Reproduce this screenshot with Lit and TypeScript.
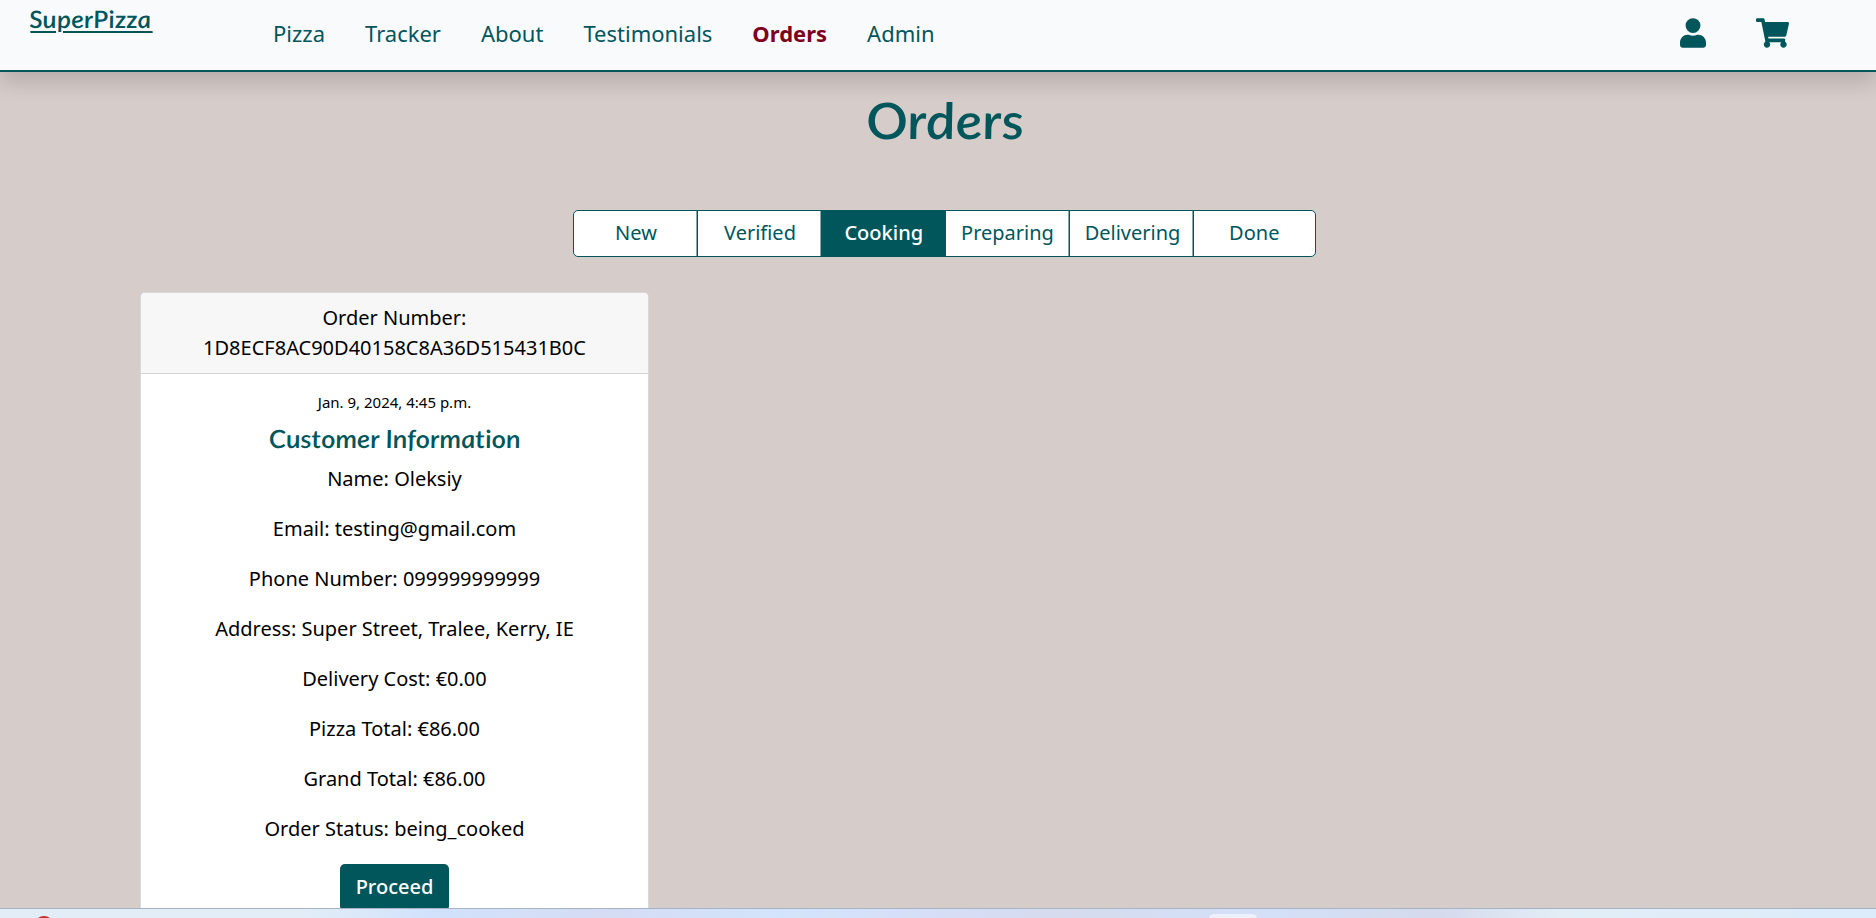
import { LitElement, html, css, svg } from "lit";
import { customElement, property } from "lit/decorators.js";
import { classMap } from "lit/directives/class-map.js";

const NAV = ["Pizza", "Tracker", "About", "Testimonials", "Orders", "Admin"];
const STATUSES = ["New", "Verified", "Cooking", "Preparing", "Delivering", "Done"];

const userIcon = svg`<path d="M224 256a128 128 0 1 0 0-256 128 128 0 1 0 0 256zm89.6 32h-16.7c-22.2 10.2-46.900 16-72.900 16s-50.600-5.800-72.900-16h-16.700C60.200 288 0 348.200 0 422.400V464c0 26.500 21.500 48 48 48h352c26.500 0 48-21.500 48-48v-41.600c0-74.200-60.200-134.400-134.400-134.400z"/>`;
const cartIcon = svg`<path d="M528.120 301.319l47.273-208C578.806 78.301 567.391 64 551.990 64H159.208l-9.166-44.810C147.758 8.021 137.930 0 126.529 0H24C10.745 0 0 10.745 0 24v16c0 13.255 10.745 24 24 24h69.883l70.248 343.435C147.325 417.100 136 435.222 136 456c0 30.928 25.072 56 56 56s56-25.072 56-56c0-15.674-6.447-29.835-16.824-40h209.647C430.447 426.165 424 440.326 424 456c0 30.928 25.072 56 56 56s56-25.072 56-56c0-22.172-12.888-41.332-31.579-50.405l5.517-24.276c3.413-15.018-8.002-29.319-23.403-29.319H218.117l-6.545-32h293.145c11.206 0 20.920-7.754 23.403-18.681z"/>`;

@customElement("site-header")
class SiteHeader extends LitElement {
  static styles = css`
    :host { display: block; position: relative; z-index: 1; }
    .bar {
      box-sizing: border-box;
      height: 72px;
      display: flex;
      align-items: flex-start;
      background: #f8fafc;
      border-bottom: 2px solid #00565b;
      box-shadow: 0 10px 20px rgba(0, 0, 0, 0.15);
    }
    .brand {
      width: 244px;
      padding: 3px 0 0 30px;
      box-sizing: border-box;
      font: italic 600 24px/32px Lato, sans-serif;
      color: #00565b;
    }
    .word {
      display: inline-block;
      transform: scaleX(1.095) skewX(6deg);
      transform-origin: 0 80%;
      text-decoration: underline;
      text-decoration-thickness: 2px;
      text-underline-offset: 3px;
      letter-spacing: 0.2px;
    }
    .links { display: flex; gap: 40px; padding: 17px 0 0 29px; }
    .link { font: 22px/33px "Noto Sans", sans-serif; color: #00565b; text-decoration: none; }
    .active { font-weight: 700; color: #7d0020; }
    .icons { margin-left: auto; display: flex; padding: 18px 87px 0 0; gap: 50px; }
    .icon { display: block; fill: #00565b; height: 30px; }
    .user { width: 26px; }
    .cart { width: 33px; }
  `;
  render() {
    return html`<nav class="bar">
      <a class="brand"><span class="word">SuperPizza</span></a>
      <div class="links">
        ${NAV.map((n) => html`<a class=${classMap({ link: true, active: n === "Orders" })}>${n}</a>`)}
      </div>
      <div class="icons">
        <svg class="icon user" viewBox="0 0 448 512">${userIcon}</svg>
        <svg class="icon cart" viewBox="0 0 576 512">${cartIcon}</svg>
      </div>
    </nav>`;
  }
}

@customElement("status-tabs")
class StatusTabs extends LitElement {
  @property() current = "Cooking";
  static styles = css`
    :host { display: block; }
    .group {
      box-sizing: border-box;
      width: 743px;
      height: 47px;
      display: grid;
      grid-template-columns: 124px 124px 123.5px 124px 124px 1fr;
      border: 1px solid #00565b;
      border-radius: 5px;
      background: #fff;
      overflow: hidden;
    }
    .tab {
      font: 20px/44px "Noto Sans", sans-serif;
      text-align: center;
      color: #00565b;
      white-space: nowrap;
    }
    .tab:not(:last-child) { box-shadow: inset -1.5px 0 #00565b; }
    .tab:nth-child(5) { padding-left: 2px; }
    .on { background: #00565b; color: #fff; font-weight: 500; }
  `;
  render() {
    return html`<div class="group">
      ${STATUSES.map((s) => html`<div class=${classMap({ tab: true, on: s === this.current })}>${s}</div>`)}
    </div>`;
  }
}

@customElement("order-card")
class OrderCard extends LitElement {
  static styles = css`
    :host { display: block; }
    .card {
      box-sizing: border-box;
      width: 509px;
      height: 700px;
      border: 1px solid #d9d9d9;
      border-radius: 5px;
      background: #fff;
      overflow: hidden;
      font: 20px/30px "Noto Sans", sans-serif;
      color: #000;
      text-align: center;
    }
    .head { padding: 10px 20px; background: #f7f7f7; border-bottom: 1px solid #d6d6d6; }
    .body { padding: 16px 20px; }
    .date { font-size: 15px; line-height: 24px; }
    .title {
      margin: 9px 0 11px;
      font: italic 600 25px/30px Lato, sans-serif;
      font-variant-ligatures: none;
      color: #00565b;
      transform: scaleX(1.095) skewX(6deg);
    }
    .row { margin: 0 0 20px; }
    .go {
      display: inline-block;
      height: 47px;
      padding: 0 16px;
      border-radius: 5px;
      background: #00565b;
      color: #fff;
      font-weight: 500;
      line-height: 46px;
    }
  `;
  render() {
    const rows = [
      "Name: Oleksiy",
      "Email: testing@gmail.com",
      "Phone Number: 099999999999",
      "Address: Super Street, Tralee, Kerry, IE",
      "Delivery Cost: €0.00",
      "Pizza Total: €86.00",
      "Grand Total: €86.00",
      "Order Status: being_cooked",
    ];
    return html`<article class="card">
      <div class="head">Order Number:<br />1D8ECF8AC90D40158C8A36D515431B0C</div>
      <div class="body">
        <div class="date">Jan. 9, 2024, 4:45 p.m.</div>
        <h2 class="title">Customer Information</h2>
        ${rows.map((r) => html`<p class="row">${r}</p>`)}
        <a class="go">Proceed</a>
      </div>
    </article>`;
  }
}

@customElement("app-root")
class AppRoot extends LitElement {
  static styles = css`
    :host {
      display: flex;
      flex-direction: column;
      height: 918px;
      overflow: hidden;
      background: #d6ccca;
    }
    .main { flex: 1; min-height: 0; overflow: hidden; margin-top: -72px; padding-top: 72px; }
    .heading {
      margin: 16px 0 0 13px;
      text-align: center;
      font: italic 600 50px/64px Lato, sans-serif;
      color: #00565b;
      transform: scaleX(1.11) skewX(6deg);
    }
    .tabs { display: flex; justify-content: center; padding: 58px 0 0 13px; }
    .orders { display: flex; padding: 35px 0 0 140px; }
    .dock {
      box-sizing: border-box;
      height: 10px;
      overflow: hidden;
      border-top: 1px solid #a5b3c4;
      background: linear-gradient(90deg, #e2edf7 0, #e2edf7 300px, #d2e2fc 430px, #d5dcf4 600px, #d2e4fb 780px, #d6dff9 900px, #d6dbee 1060px, #d3e0f8 1260px, #d5daec 1440px, #e2edf6 1560px, #dcecfb 1876px);
      display: flex;
    }
    .dot { flex: none; width: 20px; height: 20px; margin: 7px 0 0 34px; border-radius: 50%; background: #c22f26; }
    .tile { flex: none; width: 48px; height: 40px; margin: 5px 0 0 1155px; border-radius: 5px; background: #edf1fb; }
  `;
  render() {
    return html`<site-header></site-header>
      <main class="main">
        <h1 class="heading">Orders</h1>
        <div class="tabs"><status-tabs current="Cooking"></status-tabs></div>
        <div class="orders"><order-card></order-card></div>
      </main>
      <div class="dock"><span class="dot"></span><span class="tile"></span></div>`;
  }
}
